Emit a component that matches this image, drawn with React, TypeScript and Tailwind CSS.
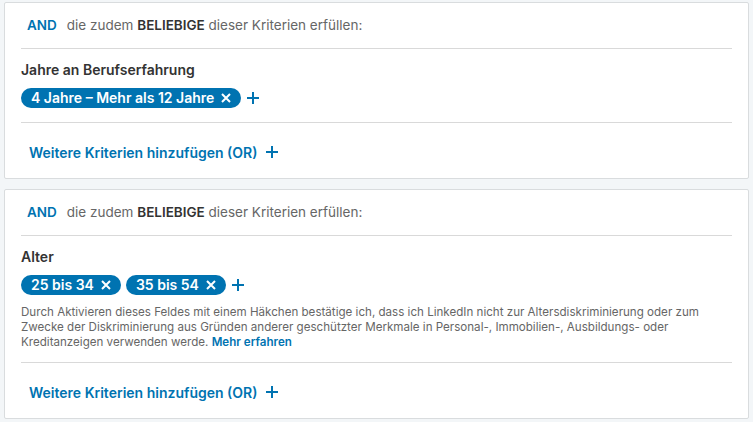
import React from "react";

const font = { fontFamily: "Inter, 'Noto Sans', sans-serif" };

function Plus() {
  return (
    <svg width="12" height="12" viewBox="0 0 12 12" className="shrink-0">
      <path d="M6 0v12M0 6h12" stroke="#0073b1" strokeWidth="2" />
    </svg>
  );
}

function X() {
  return (
    <svg width="10" height="10" viewBox="0 0 10 10" className="shrink-0">
      <path d="M1 1l8 8M9 1l-8 8" stroke="#fff" strokeWidth="2" />
    </svg>
  );
}

function Chip({ label }: { label: string }) {
  return (
    <span className="inline-flex items-center gap-[7px] h-[20px] rounded-full bg-[#0073b1] pl-[10px] pr-[10px] text-[14px] font-semibold text-white leading-none">
      {label}
      <X />
    </span>
  );
}

function Card({ title, chips, note }: { title: string; chips: string[]; note?: boolean }) {
  return (
    <div className="bg-white border border-[#d9dcde] rounded-[2px] px-[16px]">
      <div className="h-[46px] flex items-center border-b border-[#d9d9d9] pl-[6px] text-[13.5px]">
        <span className="font-semibold text-[#0073b1] mr-[10px]">AND</span>
        <span className="text-[#666]">
          die zudem <span className="font-semibold text-[#333]">BELIEBIGE</span> dieser Kriterien erfüllen:
        </span>
      </div>
      <div className={note ? "pt-[12px] pb-[12px] border-b border-[#d9d9d9]" : "pt-[12px] pb-[14px] border-b border-[#d9d9d9]"}>
        <div className="text-[14px] font-semibold text-[#333] leading-[18px]">{title}</div>
        <div className="flex items-center gap-[5px] mt-[9px]">
          {chips.map((c) => (
            <Chip key={c} label={c} />
          ))}
          <span className="ml-[1px]">
            <Plus />
          </span>
        </div>
        {note && (
          <p className="mt-[10px] text-[11.6px] leading-[15px] text-[#666]">
            Durch Aktivieren dieses Feldes mit einem Häkchen bestätige ich, dass ich LinkedIn nicht zur Altersdiskriminierung oder zum Zwecke der Diskriminierung aus Gründen anderer geschützter Merkmale in Personal-, Immobilien-, Ausbildungs- oder Kreditanzeigen verwenden werde.{" "}
            <span className="font-semibold text-[#0073b1]">Mehr erfahren</span>
          </p>
        )}
      </div>
      <div className="h-[55px] pt-[3px] flex items-center pl-[8px] gap-[9px] text-[14px] font-semibold text-[#0073b1]">
        Weitere Kriterien hinzufügen (OR)
        <Plus />
      </div>
    </div>
  );
}

export default function App() {
  return (
    <div style={font} className="w-[753px] h-[422px] bg-[#f3f6f8] px-[4px] pt-[2px] flex flex-col gap-[10px]">
      <Card title="Jahre an Berufserfahrung" chips={["4 Jahre – Mehr als 12 Jahre"]} />
      <Card title="Alter" chips={["25 bis 34", "35 bis 54"]} note />
    </div>
  );
}
